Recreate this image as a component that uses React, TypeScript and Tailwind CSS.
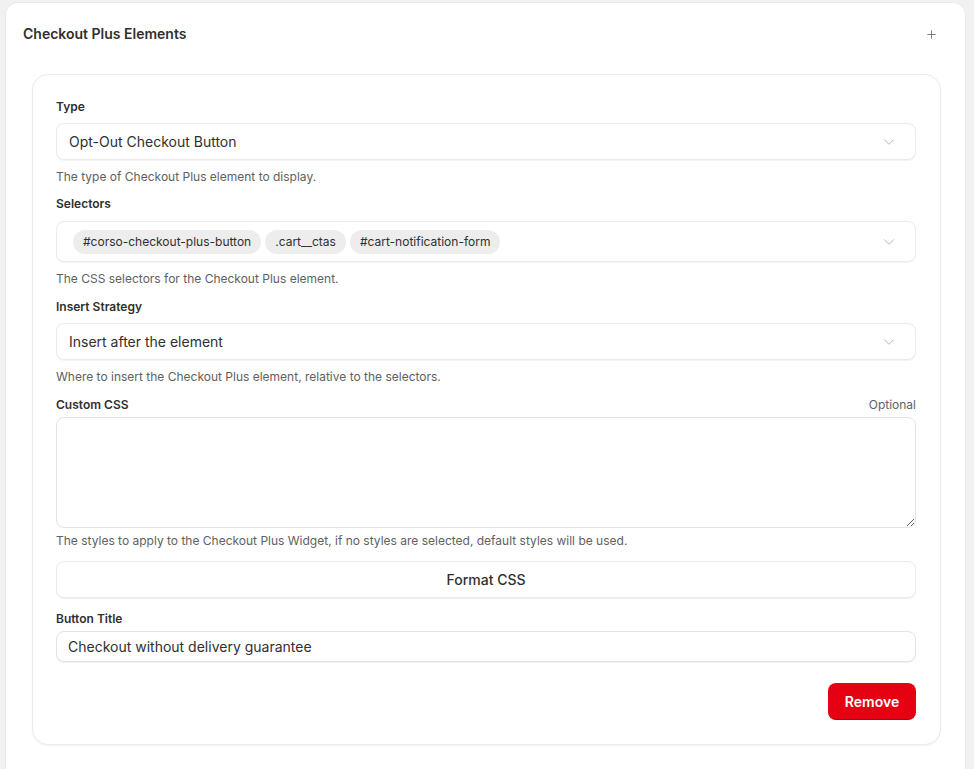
import { ChevronDown, Plus } from 'lucide-react'

const font = { fontFamily: 'Inter, "Noto Sans", sans-serif' }

function Label({ children, right }: { children: React.ReactNode; right?: string }) {
  return (
    <div className="flex h-5 items-center justify-between text-[12px] leading-5">
      <span className="font-semibold text-[#303030]">{children}</span>
      {right && <span className="text-[#616161]">{right}</span>}
    </div>
  )
}

function Help({ children }: { children: React.ReactNode }) {
  return <p className="h-4 text-[12px] leading-4 text-[#616161]">{children}</p>
}

function SelectBox({ value }: { value: string }) {
  return (
    <div className="flex h-[37px] items-center justify-between rounded-lg border border-[#ebebeb] bg-white pr-[17px] pl-[12px] shadow-[0_1px_0_rgba(0,0,0,0.04)]">
      <span className="text-[14px] text-[#303030]">{value}</span>
      <ChevronDown size={18} strokeWidth={1.1} className="text-[#a8a8a8]" />
    </div>
  )
}

export default function App() {
  const selectors = ['#corso-checkout-plus-button', '.cart__ctas', '#cart-notification-form']

  return (
    <div className="min-h-[769px] bg-[#f1f1f1] pt-[3px] pl-[6px]" style={font}>
      <div className="w-[959px] rounded-t-xl bg-white pb-[24px] shadow-[0_0_0_1px_rgba(0,0,0,0.03)]">
        {/* header */}
        <div className="flex items-center justify-between pt-[21px] pr-[27px] pl-[17px]">
          <h2 className="text-[14px] leading-5 font-semibold text-[#303030]">Checkout Plus Elements</h2>
          <Plus size={13} strokeWidth={1.5} className="text-[#616161]" />
        </div>

        {/* element card */}
        <div className="mt-[30px] mr-[24px] ml-[26px] rounded-2xl border border-[#ebebeb] bg-white pt-[22px] pr-[24px] pb-[24px] pl-[23px] shadow-[0_1px_2px_rgba(0,0,0,0.05)]">
          <Label>Type</Label>
          <div className="mt-[6px]">
            <SelectBox value="Opt-Out Checkout Button" />
          </div>
          <div className="mt-[9px]">
            <Help>The type of Checkout Plus element to display.</Help>
          </div>

          <div className="mt-[9px]">
            <Label>Selectors</Label>
          </div>
          <div className="mt-[7px] flex h-[41px] items-center justify-between rounded-lg border border-[#ebebeb] bg-white pr-[17px] pl-[16px] shadow-[0_1px_0_rgba(0,0,0,0.04)]">
            <div className="flex items-center gap-[4px]">
              {selectors.map(s => (
                <span
                  key={s}
                  className="flex h-6 items-center rounded-full bg-[#ededed] px-[10px] text-[12px] text-[#303030]"
                >
                  {s}
                </span>
              ))}
            </div>
            <ChevronDown size={18} strokeWidth={1.1} className="text-[#a8a8a8]" />
          </div>
          <div className="mt-[9px]">
            <Help>The CSS selectors for the Checkout Plus element.</Help>
          </div>

          <div className="mt-[10px]">
            <Label>Insert Strategy</Label>
          </div>
          <div className="mt-[6px]">
            <SelectBox value="Insert after the element" />
          </div>
          <div className="mt-[9px]">
            <Help>Where to insert the Checkout Plus element, relative to the selectors.</Help>
          </div>

          <div className="mt-[10px]">
            <Label right="Optional">Custom CSS</Label>
          </div>
          <textarea
            className="mt-[2px] block h-[111px] w-full resize-y rounded-lg border border-[#e3e3e3] bg-white px-3 py-2 text-[14px] text-[#303030] outline-none"
            defaultValue=""
          />
          <div className="mt-[5px]">
            <Help>The styles to apply to the Checkout Plus Widget, if no styles are selected, default styles will be used.</Help>
          </div>

          <button className="mt-[12px] flex h-[37px] w-full items-center justify-center rounded-lg border border-[#ebebeb] bg-white text-[14px] font-medium text-[#303030] shadow-[0_1px_0_rgba(0,0,0,0.06)]">
            Format CSS
          </button>

          <div className="mt-[11px]">
            <Label>Button Title</Label>
          </div>
          <div className="mt-[2px] flex h-[31px] items-center rounded-lg border border-[#e3e3e3] bg-white px-[11px] shadow-[0_1px_0_rgba(0,0,0,0.05)]">
            <span className="text-[14px] text-[#303030]">Checkout without delivery guarantee</span>
          </div>

          <div className="mt-[21px] flex justify-end">
            <button className="flex h-[37px] w-[88px] items-center justify-center rounded-lg bg-[#e50012] text-[14px] font-semibold text-white shadow-[inset_0_-1px_0_rgba(0,0,0,0.2)]">
              Remove
            </button>
          </div>
        </div>
      </div>
    </div>
  )
}
